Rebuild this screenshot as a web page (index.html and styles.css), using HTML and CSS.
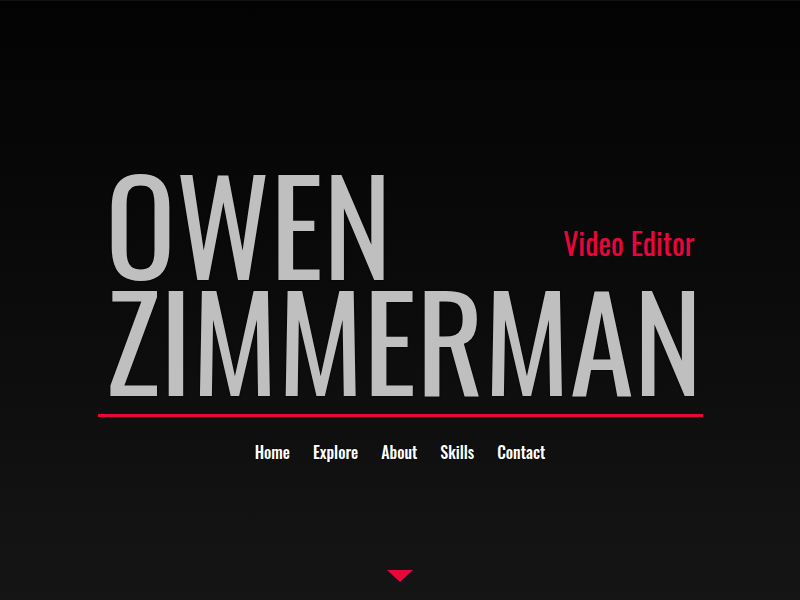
FILE: index.html
```html
<!DOCTYPE html>
<html lang="en">
<head>
<meta charset="utf-8">
<title>Owen Zimmerman</title>
<link rel="stylesheet" href="styles.css">
</head>
<body>
<main class="page">
  <header class="hero">
    <div class="title-row">
      <h1 class="name">OWEN</h1>
      <p class="role">Video Editor</p>
    </div>
    <h1 class="name">ZIMMERMAN</h1>
    <div class="rule"></div>
    <nav class="nav">
      <a href="#home">Home</a>
      <a href="#explore">Explore</a>
      <a href="#about">About</a>
      <a href="#skills">Skills</a>
      <a href="#contact">Contact</a>
    </nav>
  </header>
  <a class="down" href="#explore" aria-label="Scroll down"></a>
</main>
</body>
</html>
```
FILE: styles.css
```css
html, body {
  margin: 0;
  padding: 0;
}
body {
  background: linear-gradient(to bottom, #030303 0%, #0b0b0b 50%, #151515 100%);
  font-family: "Oswald", "Liberation Sans Narrow", sans-serif;
  height: 600px;
  overflow: hidden;
  border-top: 1px solid #121212;
  box-sizing: border-box;
}
.page {
  height: 599px;
  display: flex;
  flex-direction: column;
  align-items: center;
}
.hero {
  width: 605px;
  margin-top: 163px;
  display: flex;
  flex-direction: column;
}
.title-row {
  display: flex;
  justify-content: space-between;
  align-items: flex-end;
}
.name {
  margin: 0;
  padding-left: 8px;
  font-size: 130px;
  font-weight: 400;
  line-height: 116px;
  color: #bfbfbf;
  text-shadow: 0 0 2px #000;
  letter-spacing: 0;
}
.role {
  margin: 0 8px 22px 0;
  font-size: 30px;
  line-height: 30px;
  color: #e8063c;
}
.rule {
  height: 3px;
  background: #e8063c;
  margin-top: 18px;
}
.nav {
  display: flex;
  justify-content: center;
  gap: 23px;
  margin-top: 22px;
}
.nav a {
  color: #fff;
  text-decoration: none;
  font-size: 16px;
  font-weight: 500;
  line-height: 26px;
  text-shadow: 0 0 2px #000;
}
.down {
  margin-top: auto;
  margin-bottom: 18px;
  width: 0;
  height: 0;
  border-left: 13px solid transparent;
  border-right: 13px solid transparent;
  border-top: 12px solid #e8063c;
}
```
